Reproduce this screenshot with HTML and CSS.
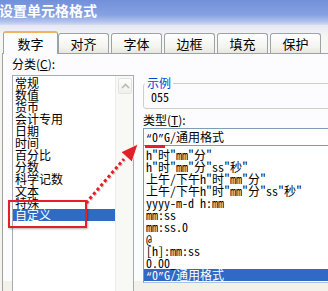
FILE: index.html
```html
<!DOCTYPE html>
<html lang="zh-Hans">
<head>
    <meta charset="UTF-8">
    <title>设置单元格格式</title>
    <link rel="stylesheet" href="styles.css">
</head>
<body>
    <div class="dialog">
        <div class="titlebar">设置单元格格式</div>
        <div class="tabs">
            <div class="tab active">数字</div>
            <div class="tab">对齐</div>
            <div class="tab">字体</div>
            <div class="tab">边框</div>
            <div class="tab">填充</div>
            <div class="tab">保护</div>
        </div>
        <div class="panel">
            <div class="left">
                <div class="label">分类(<u>C</u>):</div>
                <div class="catlist">
                    <ul class="items">
                        <li>常规</li>
                        <li>数值</li>
                        <li>货币</li>
                        <li>会计专用</li>
                        <li>日期</li>
                        <li>时间</li>
                        <li>百分比</li>
                        <li>分数</li>
                        <li>科学记数</li>
                        <li>文本</li>
                        <li>特殊</li>
                        <li class="selected">自定义</li>
                    </ul>
                    <div class="scrollbar">
                        <div class="scroll-btn">
                            <svg width="9" height="6" viewBox="0 0 9 6"><path d="M1 5 L4.5 1.5 L8 5" fill="none" stroke="#b9b9b4" stroke-width="1.6"/></svg>
                        </div>
                    </div>
                </div>
            </div>
            <div class="right">
                <fieldset class="sample">
                    <legend>示例</legend>
                    <div class="sample-value">055</div>
                </fieldset>
                <div class="label">类型(<u>T</u>):</div>
                <div class="typebox"><span class="mark"><span class="q">“</span>0<span class="q">”</span></span>G/通用格式</div>
                <ul class="fmtlist">
                    <li>h"时"mm"分"</li>
                    <li>h"时"mm"分"ss"秒"</li>
                    <li>上午/下午h"时"mm"分"</li>
                    <li>上午/下午h"时"mm"分"ss"秒"</li>
                    <li>yyyy-m-d h:mm</li>
                    <li>mm:ss</li>
                    <li>mm:ss.0</li>
                    <li>@</li>
                    <li>[h]:mm:ss</li>
                    <li>0.00_</li>
                    <li class="selected"><span class="q">“</span>0<span class="q">”</span>G/通用格式</li>
                </ul>
            </div>
        </div>

        <!-- annotation drawn over the dialog -->
        <div class="redbox"></div>
        <svg class="arrow" width="328" height="291" viewBox="0 0 328 291">
            <line x1="86" y1="203" x2="124" y2="159" stroke="#9a9a9a" stroke-opacity="0.5" stroke-width="3" stroke-dasharray="3 2.6" transform="translate(1 1)"/>
            <line x1="86" y1="203" x2="124" y2="159" stroke="#e3202a" stroke-width="3" stroke-dasharray="3 2.6"/>
            <polygon points="138,144 132,162 121,152" fill="#e3202a" stroke="#fff" stroke-width="0.8"/>
        </svg>
    </div>
</body>
</html>
```

FILE: styles.css
```css
* {
    box-sizing: border-box;
}
body {
    margin: 0;
    width: 328px;
    height: 291px;
    overflow: hidden;
    background-color: #f4f3ee;
    font-family: "Noto Sans Mono CJK SC", "Noto Sans CJK SC", sans-serif;
    font-size: 12px;
    color: #000;
}
.dialog {
    position: relative;
    width: 350px;
}
.titlebar {
    height: 25px;
    line-height: 20px;
    text-indent: -1px;
    font-family: "Noto Sans CJK SC", sans-serif;
    font-size: 14px;
    font-weight: bold;
    color: #fff;
    background: linear-gradient(#7290da, #86a2e3 60%, #b4c4ec 88%, #d6ddf0);
}
.tabs {
    display: flex;
    align-items: flex-end;
    height: 28px;
    padding-left: 3px;
    background: linear-gradient(#e4e8f2, #f6f6f3 40%);
}
.tab {
    width: 51px;
    height: 20px;
    margin-right: 2px;
    line-height: 20px;
    text-align: center;
    font-family: "Noto Sans CJK SC", sans-serif;
    font-size: 13px;
    border: 1px solid #9ca3a6;
    border-bottom: none;
    border-radius: 3px 3px 0 0;
    background: linear-gradient(#ffffff, #f3f3ef 70%, #e7e6df);
}
.tab.active {
    width: 55px;
    height: 23px;
    margin-right: 0;
    margin-bottom: -1px;
    padding-top: 1px;
    position: relative;
    z-index: 1;
    border-top: 2px solid #f0b45e;
    background: #fcfcfe;
}
.panel {
    display: flex;
    gap: 9px;
    height: 260px;
    margin-left: 2px;
    padding-left: 9px;
    border: 1px solid #9ca3a6;
    background: linear-gradient(#fcfcfe 88%, #f3f1ea 88%);
}
.label {
    line-height: 16px;
    font-family: "Noto Sans CJK SC", sans-serif;
}
.left {
    width: 122px;
    padding-top: 2px;
}
.left .label {
    margin-bottom: 3px;
}
.catlist {
    display: flex;
    height: 230px;
    border: 1px solid #a4abb4;
    background: #fff;
}
ul {
    list-style: none;
    margin: 0;
    padding: 0;
}
.items {
    flex: 1;
    padding-top: 1px;
}
.items li {
    height: 12px;
    line-height: 12px;
    padding-left: 2px;
    font-family: "Noto Sans CJK SC", sans-serif;
    white-space: nowrap;
}
li.selected {
    background: #316ac5;
    color: #fff;
}
.scrollbar {
    width: 18px;
    padding: 2px 1px 0 2px;
    border-left: 1px solid #ececea;
    background: #f8f8f5;
}
.scroll-btn {
    display: flex;
    align-items: center;
    justify-content: center;
    height: 16px;
    border: 1px solid #e2e2de;
    border-radius: 2px;
    background: linear-gradient(#fdfdfb, #efefeb);
}
.right {
    width: 200px;
}
.sample {
    margin: 22px 0 0;
    padding: 0 0 4px 7px;
    border: 1px solid #d0d0bf;
    border-radius: 3px;
}
.sample legend {
    margin-left: -6px;
    padding: 0 2px;
    line-height: 14px;
    color: #0046d5;
    font-family: "Noto Sans CJK SC", sans-serif;
}
.sample-value {
    line-height: 14px;
}
.right .label {
    margin-top: 3px;
}
.typebox {
    height: 18px;
    padding-left: 2px;
    line-height: 16px;
    border: 1px solid #7f9db9;
    background: #fff;
    white-space: nowrap;
}
.q {
    font-family: "Liberation Mono", monospace;
    font-size: 10px;
}
.mark {
    position: relative;
}
.mark::after {
    content: "";
    position: absolute;
    left: -1px;
    right: -1px;
    bottom: -3px;
    height: 3px;
    background: #e3202a;
}
.fmtlist {
    height: 137px;
    padding-top: 3px;
    border: 1px solid #7f9db9;
    border-top: none;
    border-bottom-color: #a9c2e6;
    background: #fff;
}
.fmtlist li {
    height: 12px;
    line-height: 12px;
    padding-left: 2px;
    white-space: nowrap;
}
.redbox {
    position: absolute;
    left: 8px;
    top: 200px;
    width: 79px;
    height: 28px;
    border: 2px solid #e3202a;
    box-shadow: 1px 1px 2px rgba(0, 0, 0, 0.3);
}
.arrow {
    position: absolute;
    left: 0;
    top: 0;
    pointer-events: none;
}
```
